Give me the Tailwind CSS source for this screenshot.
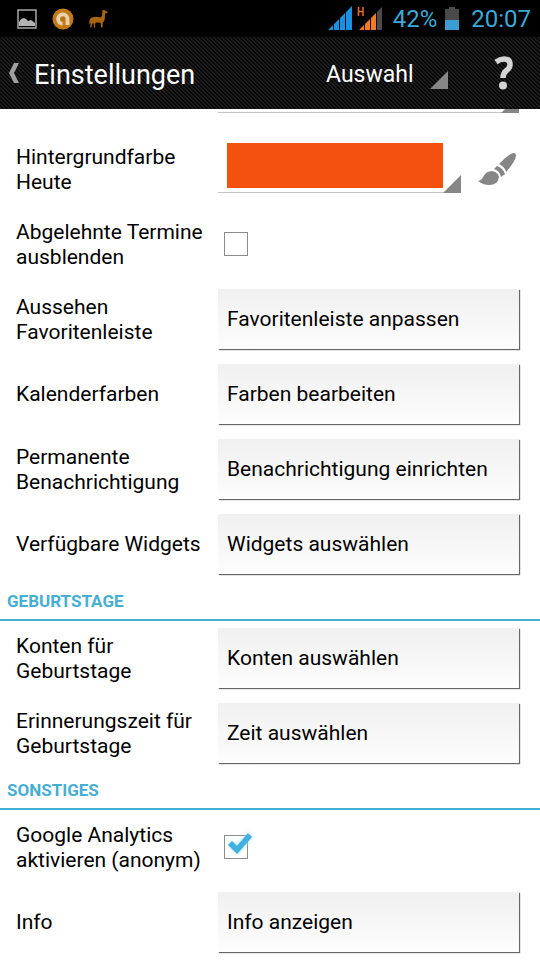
<!DOCTYPE html>
<html lang="de">
<head>
    <meta charset="UTF-8">
    <meta name="viewport" content="width=device-width, initial-scale=1.0">
    <title>Einstellungen</title>
    <script src="https://cdn.jsdelivr.net/npm/@tailwindcss/browser@4"></script>
</head>
<body class="bg-white text-black font-[Roboto,sans-serif] text-[21px] leading-[25px]">

    <!-- Status bar -->
    <div class="flex items-center justify-between h-[37px] pl-4 pr-[9px] bg-black text-[#3ba9d8]">
        <div class="flex items-center gap-[14px]">
            <svg class="w-[22px] h-[22px]" viewBox="0 0 22 22" role="img" aria-label="Bild">
                <rect x="2" y="2" width="18" height="18" fill="none" stroke="#a8a8a8" stroke-width="1.5"/>
                <path d="M3 18v-4l2-3 3-1 2 1 2 2 3-1 4 3v3z" fill="#b4b4b4"/>
            </svg>
            <svg class="w-[22px] h-[22px]" viewBox="0 0 22 22" role="img" aria-label="Virenschutz">
                <circle cx="11" cy="11" r="10.5" fill="#c47a14"/>
                <path d="M15.500 17V11a4.700 4.700 0 1 0-5 4.700" fill="none" stroke="#e6d2b0" stroke-width="3.8"/>
                <circle cx="11" cy="11" r="2" fill="#b8731c"/>
            </svg>
            <svg class="w-[22px] h-[22px]" viewBox="0 0 22 22" role="img" aria-label="Lama">
                <path d="M14.500 1.500l1 .8 1-.8.5 1.300 2.500 1-.3 1.400-2.200.3-.2 5.500q-.3 2.500-2 3.500l-.3 5h-1.400l-.6-4.700-4.500-.3-1 1.500.3 3.500H6L5.500 15l-1.500 1-.5 3.500H2.200L2.500 14 2 16l-.8-.5Q1 11 3.500 9.500q5-1.500 9 0l1.500-1.500z" fill="#a86414"/>
            </svg>
        </div>
        <div class="flex items-center gap-2">
            <svg class="w-[58px] h-[28px]" viewBox="0 0 58 28" role="img" aria-label="Signal">
                <path d="M1 25l5-5v5zM7 19l5-5v11H7zM13 13l5-5v17h-5zM19 7l6-6v24h-6z" fill="#1c8fe0"/>
                <path d="M32 25l5-5v5zM38 19l5-5v11h-5zM44 13l5-5v17h-5z" fill="#f47a20"/>
                <path d="M50 7l5-5v23h-5z" fill="#4a4a4a"/>
                <path d="M31.500 2v9M36 2v9M31.500 6.500H36" fill="none" stroke="#f46a20" stroke-width="1.5"/>
            </svg>
            <span class="text-2xl">42%</span>
            <svg class="w-[14px] h-[24px]" viewBox="0 0 14 24" role="img" aria-label="Akku">
                <path d="M0 2h4V0h6v2h4v11H0z" fill="#4a4a4a"/>
                <path d="M0 13h14v10H0z" fill="#3a9fd0"/>
            </svg>
            <span class="pl-1 text-2xl">20:07</span>
        </div>
    </div>

    <!-- Action bar -->
    <header class="flex items-center h-[72px] px-2 text-white bg-[linear-gradient(45deg,#1e1e1e_25%,#060606_25%,#060606_50%,#1e1e1e_50%,#1e1e1e_75%,#060606_75%)] bg-[length:4px_4px]">
        <button aria-label="Zurück">
            <svg class="w-[12px] h-[22px]" viewBox="0 0 12 22">
                <path d="M6 1h5L6 11l5 10H6L1 11z" fill="#a0a0a0"/>
            </svg>
        </button>
        <h1 class="pt-1 pl-[14px] text-[27px] leading-8">Einstellungen</h1>
        <div class="relative ml-auto">
            <select aria-label="Auswahl" class="block appearance-none w-[122px] h-8 pt-[2px] bg-transparent text-[23px] text-white">
                <option>Auswahl</option>
            </select>
            <svg class="absolute right-0 bottom-0 w-[18px] h-[18px] pointer-events-none" viewBox="0 0 18 18"><path d="M18 0v18H0z" fill="#868686"/></svg>
        </div>
        <button class="flex justify-center w-10 ml-9 mr-2" aria-label="Hilfe">
            <svg class="w-[20px] h-[34px]" viewBox="0 0 20 34">
                <path d="M2 6Q6 3 10 3q6 0 6 5.500 0 3.500-3.500 6Q9 17 9 22" fill="none" stroke="#d4d4d4" stroke-width="5.5"/>
                <circle cx="9" cy="29.500" r="4" fill="#d4d4d4"/>
            </svg>
        </button>
    </header>

    <main>
        <div class="flex h-[23px] pl-[218px] pr-[21px]">
            <div class="relative flex-1 h-1 overflow-hidden">
                <select aria-label="Vorherige Farbe" class="block appearance-none w-full h-1 border-b border-[#c4c4c4]"></select>
                <svg class="absolute right-0 bottom-0 w-[18px] h-[18px] pointer-events-none" viewBox="0 0 18 18"><path d="M18 0v18H0z" fill="#868686"/></svg>
            </div>
        </div>

        <div class="grid grid-cols-[202px_1fr] items-center h-[75px] pl-4 pr-[21px]">
            <label for="today-color">Hintergrundfarbe<br>Heute</label>
            <div class="flex items-center justify-between">
                <div class="relative flex-1 mb-2">
                    <select id="today-color" class="block appearance-none w-full h-[54px] pt-1 pb-1 pl-[9px] pr-[18px] bg-[#f4510e] bg-clip-content border-b border-[#c4c4c4]"></select>
                    <svg class="absolute right-0 bottom-0 w-[18px] h-[18px] pointer-events-none" viewBox="0 0 18 18"><path d="M18 0v18H0z" fill="#868686"/></svg>
                </div>
                <button class="ml-4 mr-[2px]" aria-label="Farbe wählen">
                    <svg class="w-[40px] h-[36px]" viewBox="0 0 40 36" fill="#868686">
                        <path d="M22 12Q29 4 36 1q3-.5 3 3-1 6-10 16-1-5-7-8z"/>
                        <path d="M20 14q6 2 8 8l-4 3q-1-6-7-8z"/>
                        <path d="M15 19q6 1 7 6-1 8-10 8-6 0-11-4 4-1 5-4 3-6 9-6z"/>
                    </svg>
                </button>
            </div>
        </div>

        <div class="grid grid-cols-[202px_1fr] items-center h-[75px] pl-4 pr-[21px]">
            <label for="declined">Abgelehnte Termine ausblenden</label>
            <input id="declined" type="checkbox" class="appearance-none w-6 h-6 ml-[6px] mb-[2px] border border-[#8c8c8c]">
        </div>

        <div class="grid grid-cols-[202px_1fr] items-center h-[75px] pl-4 pr-[21px]">
            <label for="favorites">Aussehen<br>Favoritenleiste</label>
            <button id="favorites" class="h-[60px] mb-[2px] pt-[2px] px-[9px] text-left bg-linear-to-b from-[#f0f0f0] to-[#fdfdfd] shadow-[1px_1px_1px_#666]">Favoritenleiste anpassen</button>
        </div>

        <div class="grid grid-cols-[202px_1fr] items-center h-[75px] pl-4 pr-[21px]">
            <label for="colors">Kalenderfarben</label>
            <button id="colors" class="h-[60px] mb-[2px] pt-[2px] px-[9px] text-left bg-linear-to-b from-[#f0f0f0] to-[#fdfdfd] shadow-[1px_1px_1px_#666]">Farben bearbeiten</button>
        </div>

        <div class="grid grid-cols-[202px_1fr] items-center h-[75px] pl-4 pr-[21px]">
            <label for="notification">Permanente<br>Benachrichtigung</label>
            <button id="notification" class="h-[60px] mb-[2px] pt-[2px] px-[9px] text-left bg-linear-to-b from-[#f0f0f0] to-[#fdfdfd] shadow-[1px_1px_1px_#666]">Benachrichtigung einrichten</button>
        </div>

        <div class="grid grid-cols-[202px_1fr] items-center h-[75px] pl-4 pr-[21px]">
            <label for="widgets">Verfügbare Widgets</label>
            <button id="widgets" class="h-[60px] mb-[2px] pt-[2px] px-[9px] text-left bg-linear-to-b from-[#f0f0f0] to-[#fdfdfd] shadow-[1px_1px_1px_#666]">Widgets auswählen</button>
        </div>

        <h2 class="flex items-center h-[39px] pt-[2px] px-[7px] border-b-2 border-[#45afd3] text-[#45afd3] text-[17px] font-bold">GEBURTSTAGE</h2>

        <div class="grid grid-cols-[202px_1fr] items-center h-[75px] pl-4 pr-[21px]">
            <label for="accounts">Konten für<br>Geburtstage</label>
            <button id="accounts" class="h-[60px] mb-[2px] pt-[2px] px-[9px] text-left bg-linear-to-b from-[#f0f0f0] to-[#fdfdfd] shadow-[1px_1px_1px_#666]">Konten auswählen</button>
        </div>

        <div class="grid grid-cols-[202px_1fr] items-center h-[75px] pl-4 pr-[21px]">
            <label for="reminder">Erinnerungszeit für<br>Geburtstage</label>
            <button id="reminder" class="h-[60px] mb-[2px] pt-[2px] px-[9px] text-left bg-linear-to-b from-[#f0f0f0] to-[#fdfdfd] shadow-[1px_1px_1px_#666]">Zeit auswählen</button>
        </div>

        <h2 class="flex items-center h-[39px] pt-[2px] px-[7px] border-b-2 border-[#45afd3] text-[#45afd3] text-[17px] font-bold">SONSTIGES</h2>

        <div class="grid grid-cols-[202px_1fr] items-center h-[75px] pl-4 pr-[21px]">
            <label for="analytics">Google Analytics<br>aktivieren (anonym)</label>
            <div class="relative ml-[6px] mb-[2px]">
                <input id="analytics" type="checkbox" checked class="peer block appearance-none w-6 h-6 border border-[#8c8c8c]">
                <svg class="hidden peer-checked:block absolute left-1 bottom-1 w-6 h-6 pointer-events-none drop-shadow-[0_0_2px_#9fdcf5]" viewBox="0 0 24 24">
                    <path d="M2 12l7 7L22 4" fill="none" stroke="#3fb0e0" stroke-width="5.5"/>
                </svg>
            </div>
        </div>

        <div class="grid grid-cols-[202px_1fr] items-center h-[75px] pl-4 pr-[21px]">
            <label for="info">Info</label>
            <button id="info" class="h-[60px] mb-[2px] pt-[2px] px-[9px] text-left bg-linear-to-b from-[#f0f0f0] to-[#fdfdfd] shadow-[1px_1px_1px_#666]">Info anzeigen</button>
        </div>
    </main>
</body>
</html>
